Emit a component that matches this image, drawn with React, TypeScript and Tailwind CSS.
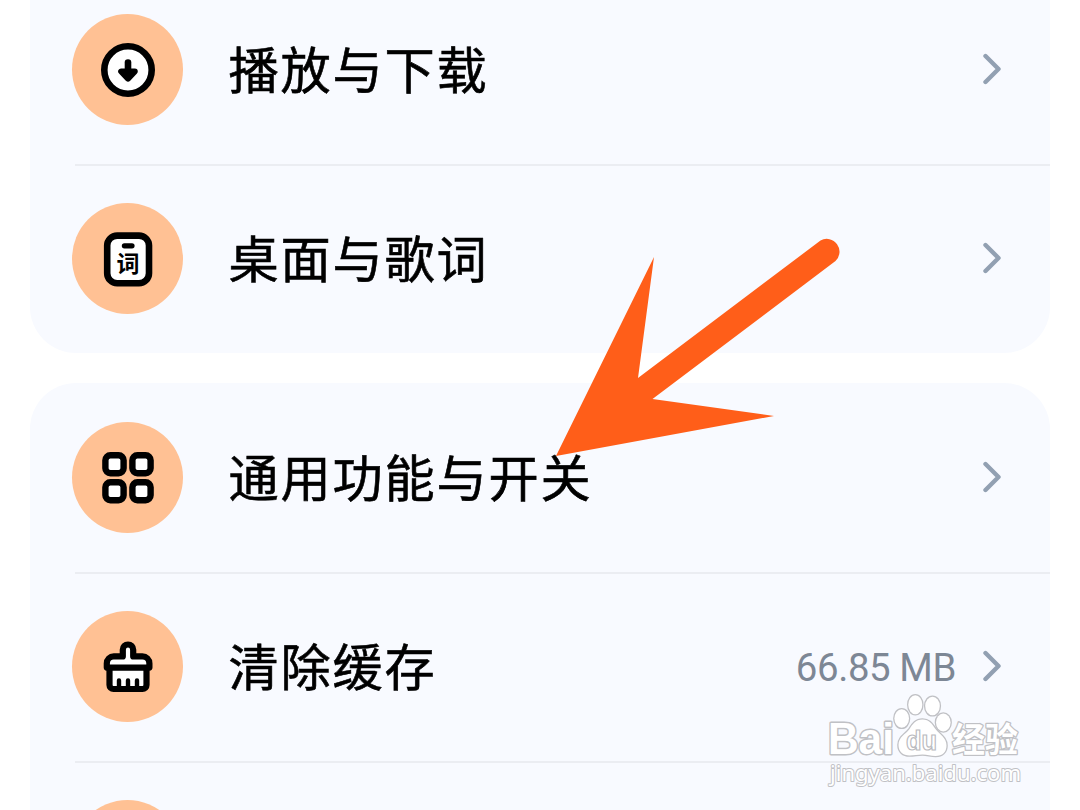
import type { ReactNode } from "react";

type Item = {
  id: string;
  label: string;
  icon: ReactNode;
  value?: string;
};

function DownloadIcon() {
  return (
    <svg viewBox="0 0 56 56" className="size-14">
      <circle cx="28" cy="28" r="23.7" fill="#fff" stroke="#000" strokeWidth="6.6" />
      <path d="M28 20.5V34" fill="none" stroke="#000" strokeWidth="6.6" strokeLinecap="round" />
      <path d="M21.2 29.5h13.6L28 36.6z" fill="#000" stroke="#000" strokeWidth="6" strokeLinejoin="round" />
    </svg>
  );
}

function LyricsIcon() {
  return (
    <svg viewBox="0 0 56 56" className="size-14">
      <rect x="7.2" y="4.6" width="41.8" height="47.6" rx="10" fill="#fff" stroke="#000" strokeWidth="6.6" />
      <path d="M24.4 14.8h7.6" stroke="#000" strokeWidth="5.2" strokeLinecap="round" />
      <text x="28" y="41.2" textAnchor="middle" fontSize="23" fontWeight="700" className="font-['Noto_Sans_CJK_SC',sans-serif]">
        词
      </text>
    </svg>
  );
}

function GridIcon() {
  return (
    <svg viewBox="0 0 56 56" className="size-14" fill="#fff" stroke="#000" strokeWidth="6.4">
      <rect x="5.4" y="5.3" width="18.2" height="18" rx="5" />
      <rect x="32.4" y="5.3" width="18.2" height="18" rx="5" />
      <rect x="5.4" y="32.3" width="18.2" height="18" rx="5" />
      <rect x="32.4" y="32.3" width="18.2" height="18" rx="5" />
    </svg>
  );
}

function BrushIcon() {
  return (
    <svg viewBox="0 0 56 56" className="size-14" fill="#fff" stroke="#000" strokeWidth="6.2" strokeLinejoin="round">
      <path d="M9.5 28h37v18a4 4 0 0 1-4 4h-29a4 4 0 0 1-4-4z" />
      <path d="M6.8 28.6v-4.2a7 7 0 0 1 7-7h9v-6.7a5.2 5.2 0 0 1 10.4 0v6.7h9.2a7 7 0 0 1 7 7v4.2z" />
      <path d="M19 41.5v8M28 41.5v8M37 41.5v8" strokeWidth="4.4" strokeLinecap="round" />
    </svg>
  );
}

function Chevron() {
  return (
    <svg viewBox="0 0 20 34" className="mb-0.5 h-[34px] w-5 shrink-0">
      <path d="M4.5 4L17.5 17L4.5 30" fill="none" stroke="#92a0b2" strokeWidth="4.4" strokeLinecap="round" strokeLinejoin="round" />
    </svg>
  );
}

function Row({ item }: { item: Item }) {
  return (
    <div className="flex h-[189px] shrink-0 items-center pr-[49px] pl-[42px]">
      <div className="flex size-[111px] shrink-0 items-center justify-center rounded-full bg-[#ffc194]">
        {item.icon}
      </div>
      <span className="ml-[45.5px] flex-1 pb-1 text-[50.2px] leading-none tracking-[1.8px] whitespace-nowrap text-black [-webkit-text-stroke:0.6px_#000]">
        {item.label}
      </span>
      {item.value && (
        <span className="mr-[25px] pt-1 font-[Roboto,sans-serif] text-[38.4px] leading-none tracking-[-0.4px] text-[#7d8795]">
          {item.value}
        </span>
      )}
      <Chevron />
    </div>
  );
}

function Divider() {
  return <div className="-mb-0.5 ml-[45px] h-0.5 shrink-0 bg-[#ebedf2]" />;
}

function Arrow() {
  return (
    <svg viewBox="0 0 300 230" className="absolute top-[232px] left-[550px] h-[230px] w-[300px]">
      <path d="M6 224L104 25L88 146L270.5 8.5A12.8 12.8 0 0 1 285.5 29L102.5 167L224 184Z" fill="#ff5e19" />
    </svg>
  );
}

function Watermark() {
  return (
    <svg viewBox="820 690 210 100" className="absolute top-[690px] left-[820px] h-[100px] w-[210px]">
      <g fill="#fff" stroke="#c0c1c5" strokeWidth="2.6" paintOrder="stroke" strokeLinejoin="round">
        <text x="828" y="754" fontSize="44" fontWeight="700" strokeWidth="3" textLength="66" lengthAdjust="spacingAndGlyphs" className="font-['Liberation_Sans',sans-serif]">
          Bai
        </text>
        <text x="952" y="751.5" fontSize="34" fontWeight="700" textLength="66" lengthAdjust="spacingAndGlyphs" className="font-['Noto_Sans_CJK_SC',sans-serif]">
          经验
        </text>
        <text x="830" y="780.5" fontSize="22.5" strokeWidth="2" textLength="191" lengthAdjust="spacingAndGlyphs" className="font-['Noto_Sans',sans-serif]">
          jingyan.baidu.com
        </text>
        <ellipse cx="901.7" cy="718.5" rx="7.3" ry="9.3" />
        <ellipse cx="915.3" cy="704.7" rx="7" ry="9.5" />
        <ellipse cx="932.5" cy="706" rx="7.3" ry="9.3" />
        <ellipse cx="943.3" cy="722.5" rx="7.3" ry="9" />
        <path d="M922.5 719.5c-7 0-10 5-13 9.500-4 5.500-11 8-11 16 0 6.500 4.500 10.500 11 10.500 5 0 8-1 13-1s8 1.500 13 1.500c7 0 11-4 11-10.500 0-8-7-11-11-16.500-3.500-5-6-9.500-13-9.500z" />
      </g>
      <text x="906" y="750" fontSize="27" fontWeight="700" textLength="31" lengthAdjust="spacingAndGlyphs" fill="#fff" stroke="#b9babe" strokeWidth="1.2" className="font-['Liberation_Sans',sans-serif]">
        du
      </text>
    </svg>
  );
}

const playback: Item[] = [
  { id: "download", label: "播放与下载", icon: <DownloadIcon /> },
  { id: "lyrics", label: "桌面与歌词", icon: <LyricsIcon /> },
];

const general: Item[] = [
  { id: "switches", label: "通用功能与开关", icon: <GridIcon /> },
  { id: "cache", label: "清除缓存", icon: <BrushIcon />, value: "66.85 MB" },
];

export default function App() {
  return (
    <div className="relative flex h-[810px] w-[1080px] flex-col gap-[30px] overflow-hidden bg-white px-[30px] font-['Noto_Sans_CJK_SC',sans-serif]">
      {/* First group is scrolled partly off the top */}
      <section className="flex h-[353px] shrink-0 flex-col justify-end rounded-b-[46px] bg-[#f8faff]">
        <Row item={playback[0]} />
        <Divider />
        <Row item={playback[1]} />
      </section>

      <section className="flex h-[600px] shrink-0 flex-col rounded-t-[46px] bg-[#f8faff]">
        <Row item={general[0]} />
        <Divider />
        <Row item={general[1]} />
        <Divider />
        <Row item={{ id: "next", label: "", icon: null }} />
      </section>

      <Arrow />
      <Watermark />
    </div>
  );
}
